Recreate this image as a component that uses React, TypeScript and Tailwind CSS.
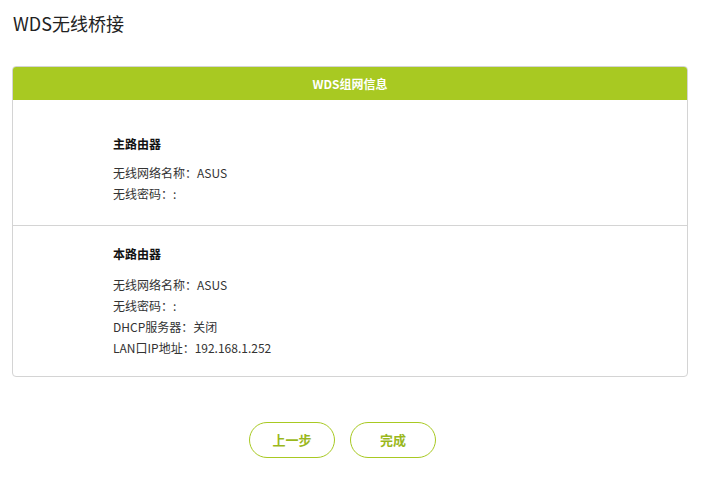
import React from "react";

const font = { fontFamily: '"Noto Sans CJK SC", "Noto Sans", sans-serif' };

export default function App() {
  return (
    <div className="w-[702px] h-[493px] bg-white text-[#333]" style={font}>
      <div className="pl-[13px] pt-[10px] h-[66px]">
        <h1 className="text-[18px] leading-[26px] text-[#222]">WDS无线桥接</h1>
      </div>
      <div className="ml-[12px] w-[676px] border border-[#d4d4d4] rounded-[4px] overflow-hidden">
        <div className="h-[33px] bg-[#a8c922] flex items-center justify-center text-white text-[12px] font-bold">
          WDS组网信息
        </div>
        <div className="h-[126px] border-b border-[#d4d4d4] pl-[100px] pt-[34px] text-[12px]">
          <div className="font-bold text-[#111] leading-[20px]">主路由器</div>
          <div className="mt-[8px] leading-[21px]">无线网络名称：ASUS</div>
          <div className="leading-[21px]">无线密码：:</div>
        </div>
        <div className="h-[150px] pl-[100px] pt-[18px] text-[12px]">
          <div className="font-bold text-[#111] leading-[20px]">本路由器</div>
          <div className="mt-[10px] leading-[21px]">无线网络名称：ASUS</div>
          <div className="leading-[21px]">无线密码：:</div>
          <div className="leading-[21px]">DHCP服务器：关闭</div>
          <div className="leading-[21px]">LAN口IP地址：192.168.1.252</div>
        </div>
      </div>
      <div className="flex justify-center gap-[15px] mt-[45px] pr-[17px]">
        <button className="w-[86px] h-[36px] rounded-full border border-[#a8c922] text-[#9ab81c] text-[13px] font-bold bg-white">
          上一步
        </button>
        <button className="w-[86px] h-[36px] rounded-full border border-[#a8c922] text-[#9ab81c] text-[13px] font-bold bg-white">
          完成
        </button>
      </div>
    </div>
  );
}
